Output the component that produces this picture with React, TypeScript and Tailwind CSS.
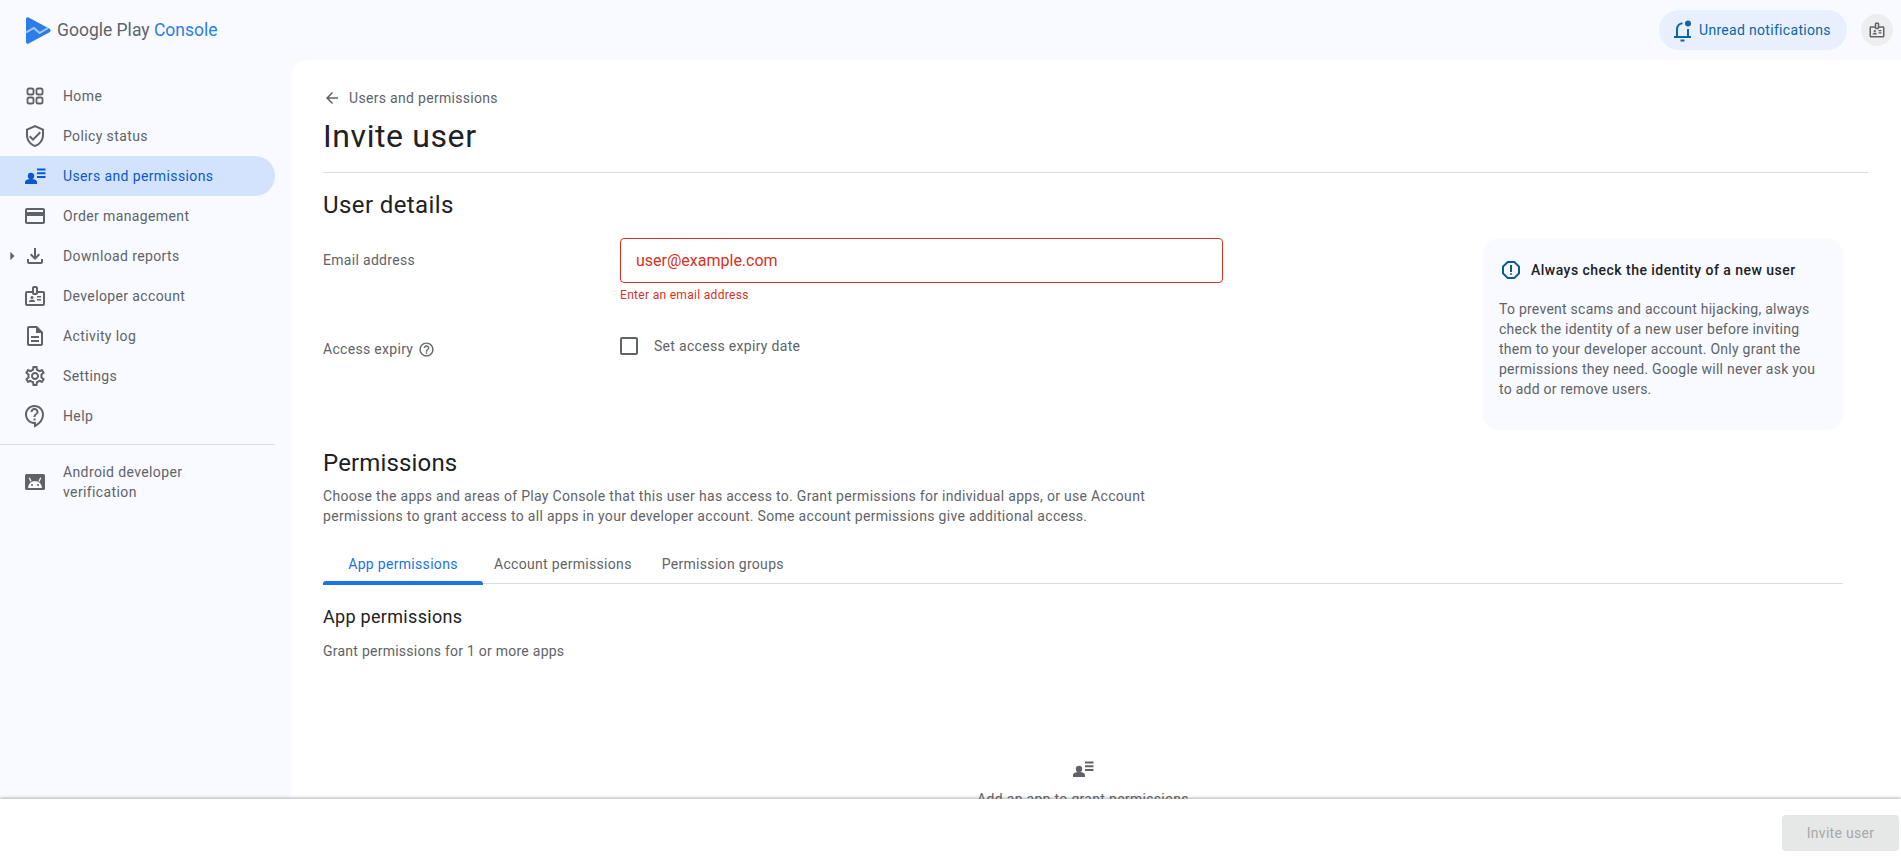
import type { ReactNode } from "react";
import {
  MdArrowBack,
  MdArrowRight,
  MdOutlineBadge,
  MdOutlineContactSupport,
  MdOutlineCreditCard,
  MdOutlineDescription,
  MdOutlineFileDownload,
  MdOutlineHelpOutline,
  MdOutlineReport,
  MdOutlineSettings,
  MdOutlineVerifiedUser,
} from "react-icons/md";

function GridIcon() {
  return (
    <svg width="24" height="24" viewBox="0 0 24 24" fill="none" stroke="currentColor" strokeWidth="1.8">
      <rect x="4.500" y="4.500" width="6" height="6" rx="1.600" />
      <rect x="13.500" y="4.500" width="6" height="6" rx="1.600" />
      <rect x="4.500" y="13.500" width="6" height="6" rx="1.600" />
      <rect x="13.500" y="13.500" width="6" height="6" rx="1.600" />
    </svg>
  );
}

function UsersIcon({ size = 24 }: { size?: number }) {
  return (
    <svg width={size} height={size} viewBox="0 0 24 24" fill="currentColor">
      <circle cx="8" cy="12" r="3.200" />
      <path d="M2 20v-1.800c0-2.100 2.800-3.200 6-3.200s6 1.100 6 3.200V20z" />
      <path d="M14 4.500h8.500v2H14zM14 8.200h8.500v2H14zM14 11.900h8.500v2H14z" />
    </svg>
  );
}

function AndroidBoxIcon() {
  return (
    <svg width="24" height="24" viewBox="0 0 24 24">
      <rect x="2" y="4" width="20" height="16" rx="1.500" fill="currentColor" />
      <path d="M5 18a7 7 0 0 1 14 0z" fill="#f8faff" />
      <path d="M8 11.500 6.300 7.800M16 11.500l1.700-3.700" stroke="#f8faff" strokeWidth="1.300" />
      <circle cx="9" cy="15" r="1" fill="currentColor" />
      <circle cx="15" cy="15" r="1" fill="currentColor" />
    </svg>
  );
}

function BellDotIcon() {
  return (
    <svg width="24" height="24" viewBox="0 0 24 24" fill="none" stroke="currentColor" strokeWidth="2">
      <path d="M3 19h17" />
      <path d="M6 19v-7.500c0-3.300 2.300-6 5.500-6.300" />
      <path d="M17 11v8" />
      <circle cx="17" cy="5.500" r="3" fill="currentColor" stroke="none" />
      <path d="M9.500 22.500h4" />
    </svg>
  );
}

function PlayLogo() {
  return (
    <svg width="25" height="27" viewBox="0 0 25 27">
      <path
        d="M0 2C0 .6 1.400-.2 2.600.5l21 11.300c1.300.7 1.300 2.700 0 3.400l-21 11.300C1.400 27.200 0 26.400 0 25z"
        fill="#2b7de9"
      />
      <path d="M0 15.500 8 11l5.500 5L22 11" fill="none" stroke="#a8c7fa" strokeWidth="2" />
    </svg>
  );
}

const navItems: { label: string; icon: ReactNode; active?: boolean; caret?: boolean }[] = [
  { label: "Home", icon: <GridIcon /> },
  { label: "Policy status", icon: <MdOutlineVerifiedUser size={24} /> },
  { label: "Users and permissions", icon: <UsersIcon />, active: true },
  { label: "Order management", icon: <MdOutlineCreditCard size={24} /> },
  { label: "Download reports", icon: <MdOutlineFileDownload size={24} />, caret: true },
  { label: "Developer account", icon: <MdOutlineBadge size={24} /> },
  { label: "Activity log", icon: <MdOutlineDescription size={24} /> },
  { label: "Settings", icon: <MdOutlineSettings size={24} /> },
  { label: "Help", icon: <MdOutlineContactSupport size={24} /> },
];

export default function App() {
  return (
    <div className="relative flex h-screen flex-col overflow-hidden bg-[#f8faff] font-['Roboto',sans-serif] text-[14px] tracking-[0.31px] text-[#5f6368]">
      {/* Top bar */}
      <header className="flex h-[60px] shrink-0 items-center justify-between pl-[26px] pr-2">
        <div className="flex items-center gap-[6px]">
          <PlayLogo />
          <span className="text-[17.5px] tracking-normal">
            Google Play <span className="text-[#2b7de9]">Console</span>
          </span>
        </div>
        <div className="flex items-center gap-[14px]">
          <button className="flex h-10 w-[188px] items-center gap-[4px] rounded-full bg-[#e8f0fe] pl-[12px] text-[#0b65a8]">
            <BellDotIcon />
            <span>Unread notifications</span>
          </button>
          <div className="flex h-8 w-8 items-center justify-center rounded-full bg-[#eeeeee]">
            <MdOutlineBadge size={18} />
          </div>
        </div>
      </header>

      <div className="flex min-h-0 flex-1">
        {/* Sidebar */}
        <aside className="w-[291px] shrink-0 pt-4 tracking-[0.38px]">
          <nav>
            {navItems.map((item) => (
              <a
                key={item.label}
                className={
                  item.active
                    ? "relative flex h-10 w-[275px] items-center gap-[16px] rounded-r-full bg-[#d3e3fd] pl-[23px] text-[#0b57d0]"
                    : "relative flex h-10 w-[275px] items-center gap-[16px] pl-[23px]"
                }
              >
                {item.caret && (
                  <span className="absolute left-[2px] top-[10px]">
                    <MdArrowRight size={20} />
                  </span>
                )}
                {item.icon}
                <span className="pt-px">{item.label}</span>
              </a>
            ))}
          </nav>
          <div className="mt-[8px] h-px w-[275px] bg-[#dadce0]" />
          <a className="mt-4 flex w-[275px] items-center gap-[16px] pl-[23px] leading-5">
            <AndroidBoxIcon />
            <span className="pt-px">
              Android developer
              <br />
              verification
            </span>
          </a>
        </aside>

        {/* Main panel */}
        <main className="min-w-0 flex-1 overflow-hidden rounded-tl-2xl bg-white pl-[32px] pr-[33px] pt-[28px]">
          <a className="flex h-5 items-center gap-[8px]">
            <MdArrowBack size={18} />
            <span>Users and permissions</span>
          </a>
          <h1 className="mt-[8px] text-[32px] leading-10 tracking-[0.6px] text-[#202124]">Invite user</h1>
          <div className="mt-[16px] h-px bg-[#dadce0]" />

          <h2 className="mt-[16px] text-[24px] leading-8 tracking-[0.4px] text-[#202124]">User details</h2>

          <div className="flex pr-[25px]">
            <div className="w-[297px] shrink-0 pt-[29px]">
              <div className="leading-5">Email address</div>
              <div className="mt-[69px] flex items-center gap-[5px] leading-5">
                Access expiry <MdOutlineHelpOutline size={17} />
              </div>
            </div>
            <div className="w-[603px] shrink-0 pt-[17px]">
              <input
                readOnly
                placeholder="user@example.com"
                className="h-[45px] w-full rounded border border-[#d93025] px-[15px] pb-px text-[16px] tracking-normal outline-none placeholder:text-[#d93025]"
              />
              <div className="mt-[4px] text-[12px] leading-4 text-[#d93025]">Enter an email address</div>
              <label className="mt-[33px] flex items-center gap-[16px] leading-5">
                <span className="h-[18px] w-[18px] rounded-[2px] border-2 border-[#5f6368]" />
                Set access expiry date
              </label>
            </div>
            <aside className="ml-auto mt-[17px] h-[192px] w-[360px] rounded-2xl bg-[#f8faff] px-4 pt-[20px]">
              <div className="flex items-center gap-[8px] text-[#202124]">
                <span className="text-[#0b5a8e]">
                  <MdOutlineReport size={24} />
                </span>
                <span className="font-medium tracking-[0.47px]">Always check the identity of a new user</span>
              </div>
              <p className="mt-[17px] leading-5 tracking-[0.25px]">
                To prevent scams and account hijacking, always check the identity of a new user before inviting them to
                your developer account. Only grant the permissions they need. Google will never ask you to add or
                remove users.
              </p>
            </aside>
          </div>

          <h2 className="mt-[17px] text-[24px] leading-8 tracking-[0.15px] text-[#202124]">Permissions</h2>
          <p className="mt-[7px] w-[860px] leading-5">
            Choose the apps and areas of Play Console that this user has access to. Grant permissions for individual
            apps, or use Account permissions to grant access to all apps in your developer account. Some account
            permissions give additional access.
          </p>

          <div className="mr-[25px] mt-[19px] flex h-[39px] border-b border-[#dadce0]">
            <button className="relative h-[39px] w-[160px] pb-px text-[#1a73e8]">
              App permissions
              <span className="absolute bottom-[-1px] left-0 h-1 w-full rounded-t-[3px] bg-[#1a73e8]" />
            </button>
            <button className="h-[39px] px-[11px] pb-px">Account permissions</button>
            <button className="ml-[8px] h-[39px] px-[11px] pb-px">Permission groups</button>
          </div>

          <h3 className="mt-[21px] text-[18px] leading-6 tracking-[0.3px] text-[#202124]">App permissions</h3>
          <p className="mt-[12px] leading-5 tracking-[0.25px]">Grant permissions for 1 or more apps</p>

          <div className="mr-[25px] mt-[96px] flex flex-col items-center">
            <UsersIcon />
            <p className="mt-[8px] leading-5">Add an app to grant permissions</p>
          </div>
        </main>
      </div>

      {/* Sticky action bar */}
      <footer className="absolute inset-x-0 bottom-0 flex h-[65px] items-center justify-end bg-white pr-[2px] pt-[3px] shadow-[0_-1px_3px_rgba(60,64,67,0.4)]">
        <button className="h-9 w-[117px] rounded bg-[#e6e7e7] text-[#a6a8aa]">Invite user</button>
      </footer>
    </div>
  );
}
